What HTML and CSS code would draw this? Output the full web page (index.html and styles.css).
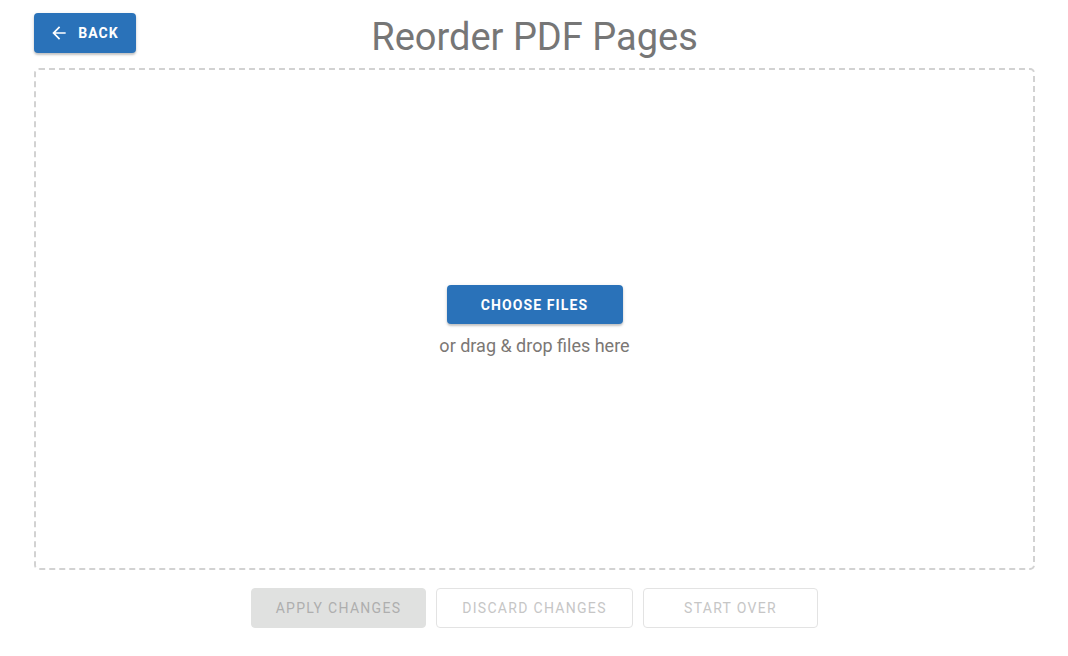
FILE: index.html
```html
<!DOCTYPE html>
<html lang="en">
<head>
<meta charset="utf-8">
<title>Reorder PDF Pages</title>
<link rel="stylesheet" href="styles.css">
</head>
<body>
<div class="page">
  <header class="header">
    <div class="header-left">
      <button class="btn btn-blue btn-back" type="button">
        <svg class="back-icon" viewBox="0 0 24 24" width="20" height="20" aria-hidden="true"><path d="M20 11H7.83l5.59-5.59L12 4l-8 8 8 8 1.41-1.41L7.83 13H20v-2z" fill="currentColor"/></svg>
        <span>Back</span>
      </button>
    </div>
    <h1 class="title">Reorder PDF Pages</h1>
    <div class="header-right"></div>
  </header>
  <section class="dropzone">
    <button class="btn btn-blue btn-choose" type="button">Choose Files</button>
    <p class="drop-hint">or drag &amp; drop files here</p>
  </section>
  <div class="actions">
    <button class="btn btn-disabled btn-apply" type="button">Apply Changes</button>
    <button class="btn btn-outline btn-discard" type="button">Discard Changes</button>
    <button class="btn btn-outline btn-start" type="button">Start Over</button>
  </div>
</div>
</body>
</html>
```

FILE: styles.css
```css
* { box-sizing: border-box; }
html, body { margin: 0; padding: 0; background: #fff; }
body {
  font-family: Roboto, "Liberation Sans", Arial, sans-serif;
  color: #757575;
}
.page {
  padding: 13px 33px 0 34px;
}
.header {
  display: grid;
  grid-template-columns: 1fr auto 1fr;
  align-items: start;
  height: 55px;
}
.title {
  margin: 0;
  padding-top: 2px;
  font-size: 38px;
  font-weight: 400;
  line-height: 44px;
  color: #767676;
  text-align: center;
}
.btn {
  font-family: Roboto, "Liberation Sans", Arial, sans-serif;
  text-transform: uppercase;
  font-size: 14px;
  border-radius: 4px;
  display: inline-flex;
  align-items: center;
  justify-content: center;
  cursor: pointer;
  padding: 0;
}
.btn-blue {
  background: #2a72b9;
  color: #fff;
  border: none;
  font-weight: 700;
  letter-spacing: 1.1px;
  box-shadow: 0 2px 2px rgba(0,0,0,0.18), 0 1px 4px rgba(0,0,0,0.1);
}
.btn-back {
  width: 102px;
  height: 40px;
  gap: 9px;
  padding-right: 2px;
}
.back-icon { display: block; }
.dropzone {
  height: 502px;
  border: 2px dashed #d2d2d2;
  border-radius: 5px;
  display: flex;
  flex-direction: column;
  align-items: center;
  justify-content: center;
  padding-top: 5px;
}
.btn-choose {
  width: 176px;
  height: 39px;
}
.drop-hint {
  margin: 10px 0 0;
  font-size: 18px;
  line-height: 24px;
  color: #7b7774;
}
.actions {
  display: flex;
  justify-content: center;
  gap: 10px;
  margin-top: 18px;
}
.actions .btn {
  height: 40px;
  font-weight: 400;
  letter-spacing: 1.3px;
  background: #fff;
}
.btn-disabled {
  background: #e0e1e0 !important;
  border: 1px solid #e0e1e0;
  color: #aeaeae;
}
.btn-outline {
  border: 1px solid #e3e3e3;
  color: #c6c6c6;
}
.btn-apply { width: 175px; }
.btn-discard { width: 197px; }
.btn-start { width: 175px; }
```
